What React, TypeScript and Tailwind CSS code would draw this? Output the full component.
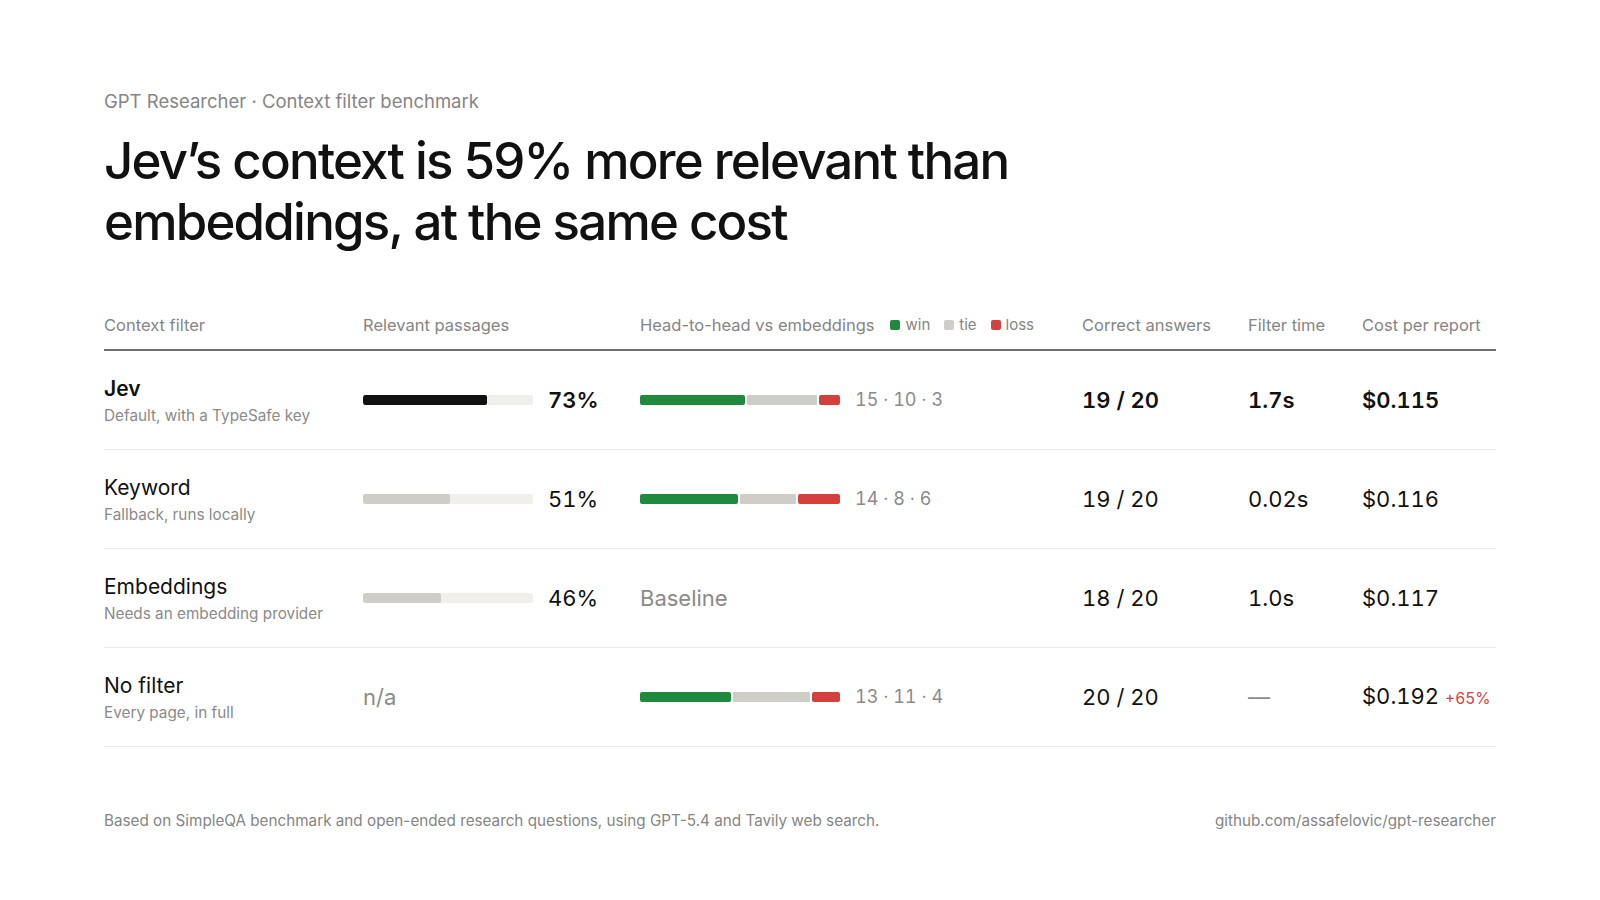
const rows = [
  {
    name: "Jev",
    sub: "Default, with a TypeSafe key",
    rel: 73,
    h2h: [15, 10, 3] as number[] | null,
    correct: "19 / 20",
    time: "1.7s",
    cost: "$0.115",
    extra: "",
    strong: true,
  },
  {
    name: "Keyword",
    sub: "Fallback, runs locally",
    rel: 51,
    h2h: [14, 8, 6],
    correct: "19 / 20",
    time: "0.02s",
    cost: "$0.116",
    extra: "",
    strong: false,
  },
  {
    name: "Embeddings",
    sub: "Needs an embedding provider",
    rel: 46,
    h2h: null,
    correct: "18 / 20",
    time: "1.0s",
    cost: "$0.117",
    extra: "",
    strong: false,
  },
  {
    name: "No filter",
    sub: "Every page, in full",
    rel: null as number | null,
    h2h: [13, 11, 4],
    correct: "20 / 20",
    time: "—",
    cost: "$0.192",
    extra: "+65%",
    strong: false,
  },
];

const cols = "grid grid-cols-[259px_277px_442px_166px_114px_1fr]";

function Legend({ color, label }: { color: string; label: string }) {
  return (
    <span className="flex items-center gap-[5px]">
      <span className={`h-[10px] w-[10px] rounded-[2px] ${color}`} />
      <span>{label}</span>
    </span>
  );
}

export default function App() {
  return (
    <div className="min-h-[900px] w-full bg-white font-['Inter',sans-serif] text-[#111]">
      <div className="px-[104px] pt-[89px]">
        <p className="text-[18.5px] leading-[24px] text-[#858585]">
          GPT Researcher · Context filter benchmark
        </p>
        <h1 className="mt-[17px] text-[51px] font-medium leading-[61px] tracking-[-0.035em] text-[#111]">
          Jev’s context is 59% more relevant than
          <br />
          embeddings, at the same cost
        </h1>

        <div className="mt-[61px]">
          <div
            className={`${cols} items-center border-b-2 border-[#6f6f6f] pb-[12px] text-[16.5px] leading-[24px] text-[#858585]`}
          >
            <div>Context filter</div>
            <div>Relevant passages</div>
            <div className="flex items-center gap-[16px]">
              <span>Head-to-head vs embeddings</span>
              <span className="flex items-center gap-[14px] text-[15px]">
                <Legend color="bg-[#1f8a3e]" label="win" />
                <Legend color="bg-[#cfcdc8]" label="tie" />
                <Legend color="bg-[#d4403d]" label="loss" />
              </span>
            </div>
            <div>Correct answers</div>
            <div>Filter time</div>
            <div>Cost per report</div>
          </div>

          {rows.map((r) => {
            const total = r.h2h ? r.h2h[0] + r.h2h[1] + r.h2h[2] : 1;
            const weight = r.strong ? "font-semibold" : "font-normal";
            return (
              <div
                key={r.name}
                className={`${cols} h-[99px] items-center border-b border-[#ebeae6]`}
              >
                <div className="pt-[2px]">
                  <div className={`text-[21px] leading-[26px] ${weight}`}>{r.name}</div>
                  <div className="mt-[4px] text-[15.3px] leading-[20px] text-[#8a8a8a]">
                    {r.sub}
                  </div>
                </div>

                <div className="flex items-center">
                  {r.rel !== null ? (
                    <>
                      <div className="h-[10px] w-[170px] overflow-hidden rounded-[2px] bg-[#f0efec]">
                        <div
                          className={`h-full rounded-[2px] ${r.strong ? "bg-[#111]" : "bg-[#cfcdc8]"}`}
                          style={{ width: `${r.rel}%` }}
                        />
                      </div>
                      <span className={`ml-[15px] text-[22px] leading-[28px] tabular-nums ${weight}`}>
                        {r.rel}%
                      </span>
                    </>
                  ) : (
                    <span className="text-[22px] leading-[28px] text-[#8a8a8a]">n/a</span>
                  )}
                </div>

                <div className="flex items-center">
                  {r.h2h ? (
                    <>
                      <div className="flex h-[10px] w-[200px] gap-[2px]">
                        <div
                          className="h-full rounded-[2px] bg-[#1f8a3e]"
                          style={{ flexGrow: r.h2h[0] / total, flexBasis: 0 }}
                        />
                        <div
                          className="h-full rounded-[1px] bg-[#cfcdc8]"
                          style={{ flexGrow: r.h2h[1] / total, flexBasis: 0 }}
                        />
                        <div
                          className="h-full rounded-[2px] bg-[#d4403d]"
                          style={{ flexGrow: r.h2h[2] / total, flexBasis: 0 }}
                        />
                      </div>
                      <span className="ml-[15px] text-[18px] leading-[24px] tabular-nums text-[#8a8a8a]">
                        {r.h2h.join(" · ")}
                      </span>
                    </>
                  ) : (
                    <span className="text-[22px] leading-[28px] text-[#8a8a8a]">Baseline</span>
                  )}
                </div>

                <div className={`text-[22px] leading-[28px] tabular-nums ${weight}`}>{r.correct}</div>
                <div
                  className={`text-[22px] leading-[28px] tabular-nums ${weight} ${r.time === "—" ? "text-[#8a8a8a]" : ""}`}
                >
                  {r.time}
                </div>
                <div className={`flex items-baseline gap-[6px] text-[22px] leading-[28px] tabular-nums ${weight}`}>
                  <span>{r.cost}</span>
                  {r.extra && <span className="text-[15.5px] text-[#d4403d]">{r.extra}</span>}
                </div>
              </div>
            );
          })}
        </div>

        <div className="mt-[64px] flex items-center justify-between text-[15.25px] leading-[20px] text-[#858585]">
          <span>
            Based on SimpleQA benchmark and open-ended research questions, using GPT-5.4 and Tavily web search.
          </span>
          <span>github.com/assafelovic/gpt-researcher</span>
        </div>
      </div>
    </div>
  );
}
